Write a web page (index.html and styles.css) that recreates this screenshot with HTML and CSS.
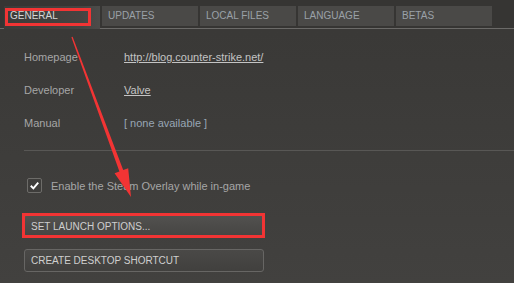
FILE: index.html
```html
<!DOCTYPE html>
<html lang="en">
  <head>
    <meta charset="UTF-8">
    <title>Properties - General</title>
    <link rel="stylesheet" href="styles.css">
  </head>
  <body>
    <div class="tabbar">
      <div class="tab active">GENERAL</div>
      <div class="tab">UPDATES</div>
      <div class="tab">LOCAL FILES</div>
      <div class="tab">LANGUAGE</div>
      <div class="tab">BETAS</div>
    </div>

    <div class="panel">
      <div class="info">
        <div class="row">
          <span class="label">Homepage</span>
          <a class="value link" href="#">http://blog.counter-strike.net/</a>
        </div>
        <div class="row">
          <span class="label">Developer</span>
          <a class="value link" href="#">Valve</a>
        </div>
        <div class="row">
          <span class="label">Manual</span>
          <span class="value muted">[ none available ]</span>
        </div>
      </div>

      <div class="divider"></div>

      <label class="check">
        <span class="box">
          <svg viewBox="0 0 15 15" width="15" height="15">
            <path d="M3.2 7.8 L6.2 10.8 L11.8 4.2" fill="none" stroke="#ffffff" stroke-width="2.2"/>
          </svg>
        </span>
        Enable the Steam Overlay while in-game
      </label>

      <div class="actions">
        <button class="btn">SET LAUNCH OPTIONS...</button>
        <button class="btn">CREATE DESKTOP SHORTCUT</button>
      </div>
    </div>

    <!-- red annotation drawn over the screenshot -->
    <svg class="markup" width="514" height="283" viewBox="0 0 514 283">
      <rect x="6.5" y="9.5" width="83" height="15" fill="none" stroke="#f23434" stroke-width="3"/>
      <rect x="23.5" y="214.5" width="240" height="22" fill="none" stroke="#f23434" stroke-width="3"/>
      <polygon fill="#f23434"
        points="71.4,37.3 72.6,36.8 123.2,170 128.2,168.2 131,197 114.6,173.2 119.4,171.4"/>
    </svg>
  </body>
</html>
```

FILE: styles.css
```css
:root {
  --bg: #3b3a38;
  --tab: #4a4947;
  --line: #6b6a68;
  --text: #a6a6a6;
  --text-light: #cfcfcf;
}

html, body {
  margin: 0;
  padding: 0;
}

body {
  width: 514px;
  height: 283px;
  overflow: hidden;
  position: relative;
  background: linear-gradient(#393836, #42413f);
  font-family: "Liberation Sans", Arial, sans-serif;
  font-size: 11px;
  color: var(--text);
}

.tabbar {
  display: flex;
  align-items: flex-start;
  gap: 2px;
  height: 22px;
  padding: 6px 0 0 4px;
  background: #363533;
  border-bottom: 1px solid var(--line);
}

.tab {
  width: 96px;
  height: 20px;
  line-height: 20px;
  padding-left: 6px;
  box-sizing: border-box;
  background: var(--tab);
  color: #9aa1a8;
  font-size: 10px;
}

.tab.active {
  height: 23px;
  background: linear-gradient(90deg, #3c3b39 0%, #454442 80%, #4d4c4a 100%);
  color: #d6d6d6;
}

.panel {
  padding: 0 0 0 24px;
}

.info {
  display: flex;
  flex-direction: column;
  padding-top: 21px;
  gap: 19px;
}

.row {
  display: flex;
  height: 14px;
  line-height: 14px;
}

.label {
  width: 100px;
}

.value {
  color: var(--text);
}

.link {
  color: #c4c4c4;
  text-decoration: underline;
}

.muted {
  color: #98a6b4;
}

.divider {
  height: 1px;
  margin-top: 20px;
  background: #585755;
}

.check {
  display: flex;
  align-items: center;
  gap: 9px;
  margin: 27px 0 0 3px;
  height: 15px;
}

.box {
  width: 15px;
  height: 15px;
  box-sizing: border-box;
  border: 1px solid #6d6c69;
  border-radius: 2px;
  background: #3e3d3b;
  display: flex;
  align-items: center;
  justify-content: center;
}

.box svg {
  display: block;
}

.actions {
  display: flex;
  flex-direction: column;
  gap: 12px;
  margin-top: 22px;
}

.btn {
  width: 240px;
  height: 22px;
  padding: 0 0 0 6px;
  text-align: left;
  font-family: inherit;
  font-size: 10px;
  color: var(--text-light);
  background: linear-gradient(#52514f, #464543);
  border: 1px solid #5e5d5b;
  border-radius: 3px;
}

.btn + .btn {
  height: 23px;
  background: linear-gradient(#4a4947, #41403e);
  border-color: #676664;
}

.markup {
  position: absolute;
  left: 0;
  top: 0;
  pointer-events: none;
}
```
